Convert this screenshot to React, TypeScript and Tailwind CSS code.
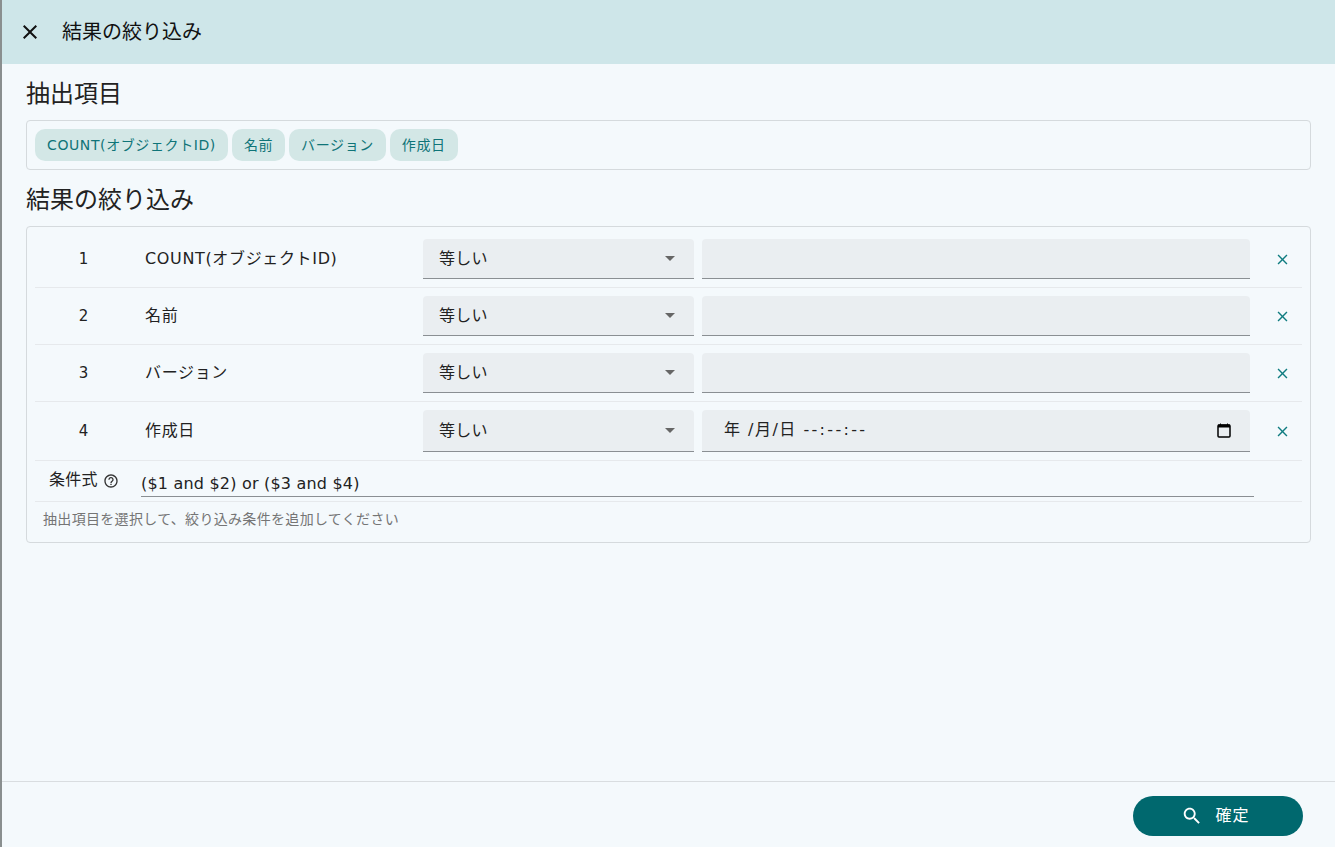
const FONT = "font-['DejaVu_Sans','Noto_Sans_CJK_JP',sans-serif]"
const CHIPS = ['COUNT(オブジェクトID)', '名前', 'バージョン', '作成日']

const ROWS = [
  { no: 1, name: 'COUNT(オブジェクトID)', rowH: 'h-[61px] pt-[12px]', fieldH: 'h-[40px]' },
  { no: 2, name: '名前', rowH: 'h-[57px] pt-[8px]', fieldH: 'h-[40px]' },
  { no: 3, name: 'バージョン', rowH: 'h-[57px] pt-[8px]', fieldH: 'h-[40px]' },
  { no: 4, name: '作成日', rowH: 'h-[59px] pt-[8px]', fieldH: 'h-[42px]', date: true },
]

function CloseIcon({ size, className }: { size: number; className?: string }) {
  return (
    <svg width={size} height={size} viewBox="0 0 24 24" fill="currentColor" className={className}>
      <path d="M19 6.41L17.59 5 12 10.59 6.41 5 5 6.41 10.59 12 5 17.59 6.41 19 12 13.41 17.59 19 19 17.59 13.41 12z" />
    </svg>
  )
}

function Row({ no, name, rowH, fieldH, date }: { no: number; name: string; rowH: string; fieldH: string; date?: boolean }) {
  return (
    <div className={`flex items-start border-b border-[#e6e9ec] ${rowH}`}>
      <div className={`flex w-[97px] items-center justify-center text-[15px] text-[#222] ${fieldH}`}>{no}</div>
      <div className={`flex w-[291px] items-center pl-[13px] text-[16px] tracking-[0.65px] text-[#222] ${fieldH}`}>
        <span className="-mt-[1px]">{name}</span>
      </div>
      <div className={`flex w-[271px] items-center justify-between rounded-t-[4px] border-b border-[#8a8f93] bg-[#eaeef1] pr-[19px] pl-[16px] text-[16px] tracking-[0.3px] text-[#222] ${fieldH}`}>
        <span>等しい</span>
        <span className="h-0 w-0 border-t-[5px] border-r-[5px] border-l-[5px] border-t-[#666] border-r-transparent border-l-transparent" />
      </div>
      <div className={`ml-[8px] flex w-[548px] items-center justify-between rounded-t-[4px] border-b border-[#8a8f93] bg-[#eaeef1] pr-[19px] pl-[22px] text-[16px] text-[#222] ${fieldH}`}>
        {date && (
          <>
            <span className="-mt-[1px] whitespace-pre tracking-[1.5px]">
              年 /月/日 <span className="tracking-[2.3px]">--:--:--</span>
            </span>
            <svg width="14" height="15" viewBox="0 0 14 15" fill="none">
              <rect x="1" y="2" width="12" height="12" rx="1" stroke="#000" strokeWidth="1.5" />
              <rect x="1" y="1.5" width="12" height="3" fill="#000" />
              <path d="M3.5 0.5v1.5M10.5 0.5v1.5" stroke="#000" />
            </svg>
          </>
        )}
      </div>
      <div className={`flex w-[52px] items-center justify-center pl-[12px] text-[#0f7c80] ${fieldH}`}>
        <CloseIcon size={17} />
      </div>
    </div>
  )
}

export default function App() {
  return (
    <div className={`h-[847px] w-[1335px] overflow-hidden bg-[#8a8f8f] pl-[2px] ${FONT}`}>
      <div className="flex h-full flex-col rounded-tl-[4px] bg-[#f4f9fc]">
        <header className="flex h-[64px] shrink-0 items-center bg-[#cee6e9] text-[#111]">
          <CloseIcon size={24} className="ml-[16px]" />
          <h1 className="ml-[20px] text-[20px] font-normal">結果の絞り込み</h1>
        </header>

        <main className="flex-1 px-[24px] pt-[14px]">
          <h2 className="h-[28px] text-[24px] leading-[32px] font-normal text-[#222]">抽出項目</h2>
          <div className="mt-[14px] flex h-[50px] items-center gap-[4px] rounded-[4px] border border-[#d5dadd] pl-[8px]">
            {CHIPS.map((c) => (
              <span key={c} className="flex h-[32px] items-center rounded-[10px] bg-[#d3e7e6] px-[12px] text-[14px] tracking-[0.6px] text-[#0f7478]">
                {c}
              </span>
            ))}
          </div>

          <h2 className="mt-[14px] h-[29px] text-[24px] leading-[32px] font-normal text-[#222]">結果の絞り込み</h2>
          <div className="mt-[13px] h-[317px] rounded-[4px] border border-[#d5dadd] px-[8px]">
            {ROWS.map((r) => (
              <Row key={r.no} {...r} />
            ))}
            <div className="flex h-[41px] items-start border-b border-[#e6e9ec]">
              <span className="mt-[9px] ml-[14px] w-[49px] text-[16px] leading-[20px] tracking-[0.3px] text-[#222]">条件式</span>
              <svg className="mt-[12px] ml-[5px]" width="16" height="16" viewBox="0 0 24 24" fill="#333">
                <path d="M11 18h2v-2h-2v2zm1-16C6.48 2 2 6.48 2 12s4.48 10 10 10 10-4.48 10-10S17.52 2 12 2zm0 18c-4.41 0-8-3.59-8-8s3.59-8 8-8 8 3.59 8 8-3.59 8-8 8zm0-14c-2.21 0-4 1.79-4 4h2c0-1.1.9-2 2-2s2 .9 2 2c0 2-3 1.75-3 5h2c0-2.25 3-2.5 3-5 0-2.21-1.79-4-4-4z" />
              </svg>
              <div className="ml-[22px] h-[36px] w-[1113px] border-b border-[#8a8f93] pt-[12px] text-[16px] leading-[22px] tracking-[0.2px] text-[#222]">
                ($1 and $2) or ($3 and $4)
              </div>
            </div>
            <p className="pt-[8px] pl-[8px] text-[14px] leading-[18px] tracking-[0.32px] text-[#757575]">
              抽出項目を選択して、絞り込み条件を追加してください
            </p>
          </div>
        </main>

        <footer className="flex h-[66px] shrink-0 items-start justify-end border-t border-[#d9dde0] pt-[14px] pr-[32px]">
          <button className="flex h-[40px] w-[170px] items-center justify-center gap-[12px] rounded-full bg-[#00686e] pr-[5px] text-[16px] tracking-[1px] text-white">
            <svg width="22" height="22" viewBox="0 0 24 24" fill="currentColor">
              <path d="M15.5 14h-.79l-.28-.27C15.41 12.59 16 11.11 16 9.5 16 5.91 13.09 3 9.5 3S3 5.91 3 9.5 5.91 16 9.5 16c1.61 0 3.09-.59 4.23-1.57l.27.28v.79l5 4.99L20.49 19l-4.99-5zm-6 0C7.01 14 5 11.99 5 9.5S7.01 5 9.5 5 14 7.01 14 9.5 11.99 14 9.5 14z" />
            </svg>
            <span>確定</span>
          </button>
        </footer>
      </div>
    </div>
  )
}
